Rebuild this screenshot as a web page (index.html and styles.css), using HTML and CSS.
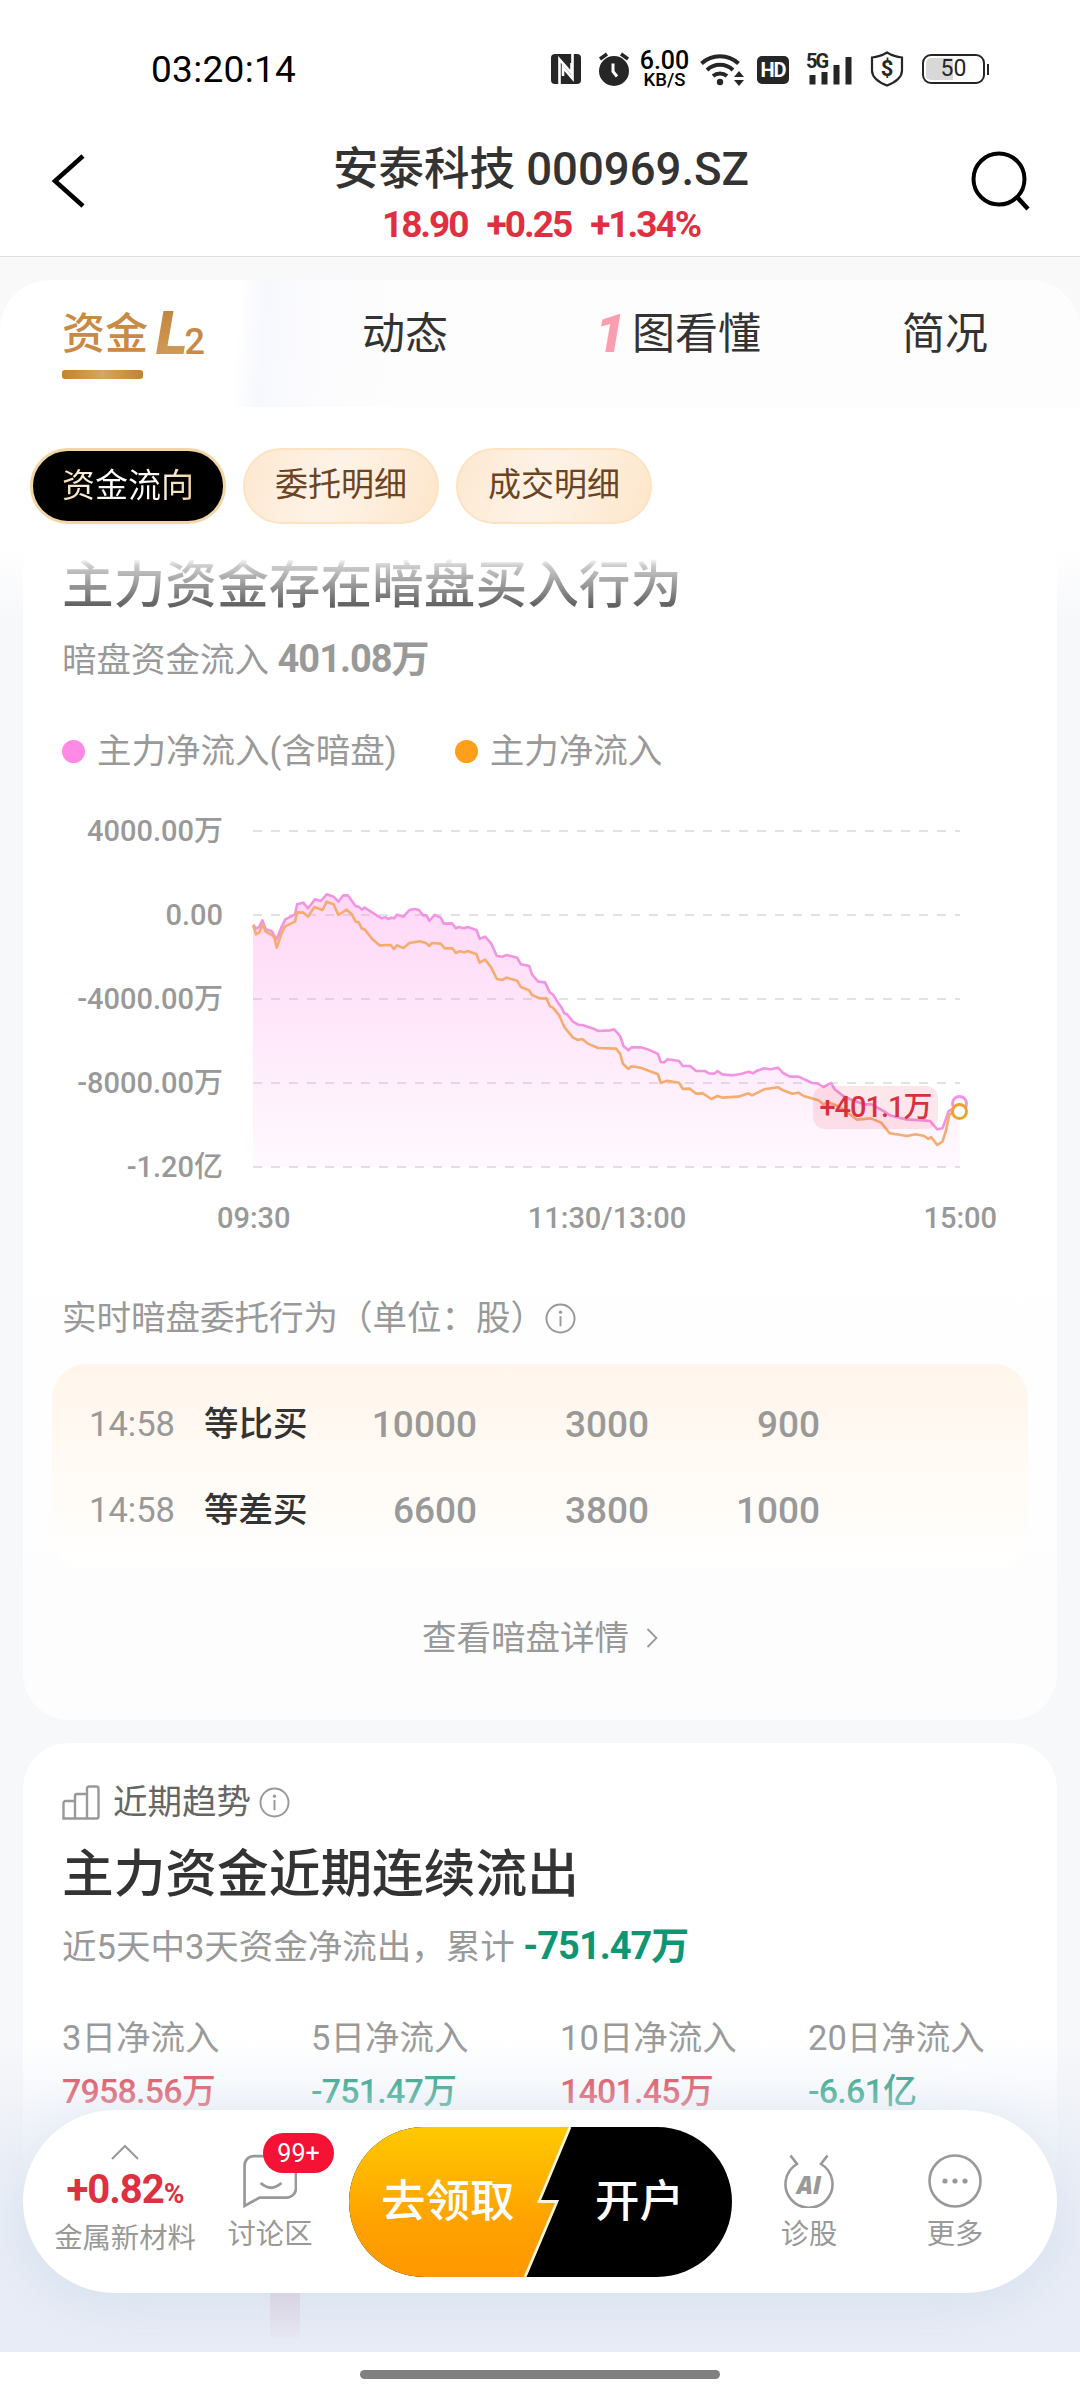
FILE: index.html
```html
<!doctype html>
<html lang="zh-CN">
<head>
	<meta charset="UTF-8">
	<meta name="viewport" content="width=device-width, initial-scale=1">
	<title>安泰科技 000969.SZ</title>
	<link rel="stylesheet" href="styles.css">
</head>
<body>

<svg class="sprite" xmlns="http://www.w3.org/2000/svg">
	<symbol id="icon-info" viewBox="0 0 32 32">
		<circle cx="16" cy="16" r="14.5" fill="none" stroke="currentColor" stroke-width="2"/>
		<circle cx="16" cy="9.5" r="1.7" fill="currentColor"/>
		<path d="M16 13.5v10.5" stroke="currentColor" stroke-width="2"/>
	</symbol>
</svg>

<div class="status">
	<span class="status__time">03:20:14</span>
	<div class="status__icons">
		<svg class="status__nfc" viewBox="0 0 30 30">
			<rect width="30" height="30" rx="4" fill="#262626"/>
			<path d="M8.5 30V5.5L20.500 19V9M21.500 0V24.500L12 13.500V22" fill="none" stroke="#fff" stroke-width="2.600"/>
		</svg>
		<svg class="status__alarm" viewBox="0 0 32 34">
			<circle cx="16" cy="19" r="15" fill="#262626"/>
			<path d="M2 7l7-5M30 7l-7-5" stroke="#262626" stroke-width="3.500"/>
			<path d="M15 11.500v8l4 5" fill="none" stroke="#fff" stroke-width="3"/>
		</svg>
		<div class="status__speed"><span>6.00</span><small>KB/S</small></div>
		<svg class="status__wifi" viewBox="0 0 45 34">
			<g fill="none" stroke="#262626" stroke-width="4">
				<path d="M1.500 11.500a27 27 0 0 1 37 0M7 18a19 19 0 0 1 26 0M13 24a11 11 0 0 1 14 0"/>
			</g>
			<circle cx="20" cy="30" r="3.200" fill="#262626"/>
			<path d="M39 19l5 6h-10zM39 34l5-6h-10z" fill="#262626"/>
		</svg>
		<span class="status__hd">HD</span>
		<div class="status__signal">
			<svg viewBox="0 0 46 34">
				<path d="M6.500 23v9.500M18.500 20v12.500M30.500 13v19.500M42.500 5v27.500" stroke="#262626" stroke-width="6"/>
			</svg>
			<span>5G</span>
		</div>
		<div class="status__shield">
			<svg viewBox="0 0 34 36">
				<path d="M17 1.500c5 3 9 4.500 15 5v13c0 7-6 11.500-15 15-9-3.500-15-8-15-15v-13c6-.5 10-2 15-5z" fill="none" stroke="#262626" stroke-width="2.200"/>
			</svg>
			<span>$</span>
		</div>
		<div class="battery"><span class="battery__body">50</span><i class="battery__tip"></i></div>
	</div>
</div>

<header class="nav">
	<svg class="nav__back" viewBox="0 0 34 54"><path d="M32 2L4 27l28 25" fill="none" stroke="#000" stroke-width="4.500"/></svg>
	<div class="nav__center">
		<div class="nav__title">安泰科技 000969.SZ</div>
		<div class="nav__quote"><span>18.90</span><span>+0.25</span><span>+1.34%</span></div>
	</div>
	<svg class="nav__search" viewBox="0 0 60 60">
		<circle cx="28" cy="28" r="25.500" fill="none" stroke="#000" stroke-width="4"/>
		<path d="M46 46l11 12" stroke="#000" stroke-width="4.500"/>
	</svg>
</header>

<div class="sheet">
	<nav class="tabs">
		<div class="tab tab--active">
			<span class="tab__label">资金</span><em class="tab__l">L</em><em class="tab__two">2</em>
		</div>
		<div class="tab tab--news">动态</div>
		<div class="tab tab--chart"><em class="tab__one">1</em>图看懂</div>
		<div class="tab tab--brief">简况</div>
	</nav>
	<div class="pills">
		<a class="pill pill--active"><span>资金流向</span></a>
		<a class="pill">委托明细</a>
		<a class="pill">成交明细</a>
	</div>
</div>

<main class="content">
	<section class="card card--dark-pool">
		<h2 class="card__title card__title--faded">主力资金存在暗盘买入行为</h2>
		<p class="card__sub">暗盘资金流入 <b class="num">401.08万</b></p>

		<div class="legend">
			<i class="legend__dot legend__dot--pink"></i><span>主力净流入(含暗盘)</span>
			<i class="legend__dot legend__dot--orange"></i><span>主力净流入</span>
		</div>

		<div class="chart">
			<div class="chart__y">
				<span>4000.00万</span>
				<span>0.00</span>
				<span>-4000.00万</span>
				<span>-8000.00万</span>
				<span>-1.20亿</span>
			</div>
			<div class="chart__plot">
				<svg class="chart__svg" viewBox="0 0 2053 1008" preserveAspectRatio="none">
					<defs>
						<linearGradient id="flow" x1="0" y1="190" x2="0" y2="1008" gradientUnits="userSpaceOnUse">
							<stop offset="0" stop-color="#ff8ae6" stop-opacity=".34"/>
							<stop offset="1" stop-color="#ff8ae6" stop-opacity=".05"/>
						</linearGradient>
					</defs>
					<path class="chart__grid" d="M0 0H2053M0 252H2053M0 504H2053M0 756H2053M0 1008H2053"/>
					<path fill="url(#flow)" d="M0 1008L0 282 10 292 18 288 27 268 37 295 54 300 69 325 82 290 94 265 122 250 128 220 146 215 160 232 180 205 197 210 214 190 234 197 248 212 262 193 275 193 298 225 307 227 316 236 324 230 347 245 362 255 374 262 410 262 418 251 437 257 454 237 470 234 482 237 494 253 504 253 512 270 527 252 545 260 554 278 578 277 589 292 597 288 612 292 623 288 649 297 658 323 674 317 692 338 708 375 724 377 737 372 767 380 778 400 802 405 810 430 828 452 848 454 862 485 871 490 884 512 896 530 904 547 912 550 929 572 946 582 956 582 989 593 1002 600 1036 598 1049 595 1066 615 1076 645 1090 658 1099 649 1126 649 1149 656 1176 669 1184 693 1194 694 1203 685 1237 690 1248 705 1269 705 1287 720 1312 720 1324 727 1339 728 1349 720 1362 730 1394 733 1419 728 1439 722 1452 727 1464 719 1484 712 1502 715 1525 710 1539 726 1559 737 1584 737 1624 756 1639 757 1656 768 1679 756 1689 775 1714 795 1739 807 1774 820 1796 820 1834 842 1849 853 1894 865 1949 868 1966 870 1987 895 2002 892 2012 865 2019 842 2029 835 2052 817V1008z"/>
					<polyline class="chart__line chart__line--pink" points="0 282 10 292 18 288 27 268 37 295 54 300 69 325 82 290 94 265 122 250 128 220 146 215 160 232 180 205 197 210 214 190 234 197 248 212 262 193 275 193 298 225 307 227 316 236 324 230 347 245 362 255 374 262 385 259 392 264 402 260 410 262 418 251 437 257 454 237 470 234 482 237 494 253 504 253 512 270 527 252 545 260 554 278 578 277 589 292 597 288 612 292 623 288 649 297 658 323 674 317 692 338 708 375 724 377 737 372 767 380 778 400 802 405 810 430 828 452 848 454 862 485 871 490 884 512 896 530 904 547 912 550 929 572 946 582 956 582 989 593 1002 600 1036 598 1049 595 1066 615 1076 645 1090 658 1099 649 1126 649 1149 656 1176 669 1184 693 1194 694 1203 685 1237 690 1248 705 1269 705 1287 720 1312 720 1324 727 1339 728 1349 720 1362 730 1394 733 1419 728 1439 722 1452 727 1464 719 1484 712 1502 715 1525 710 1539 726 1559 737 1584 737 1624 756 1639 757 1656 768 1679 756 1689 775 1714 795 1739 807 1774 820 1796 820 1834 842 1849 853 1894 865 1949 868 1966 870 1987 895 2002 892 2012 865 2019 842 2029 835 2052 817"/>
					<polyline class="chart__line chart__line--orange" points="0 282 9 310 18 305 28 280 37 302 55 312 62 320 69 350 82 310 92 287 122 272 128 244 146 245 160 257 178 228 202 237 214 212 234 220 248 252 272 236 287 250 298 272 307 274 316 293 324 295 347 325 367 343 400 342 409 354 418 343 437 351 454 336 484 331 502 336 512 345 520 336 545 338 557 352 579 352 589 366 599 361 614 364 623 360 649 370 658 395 674 386 692 410 708 444 724 447 737 440 767 449 778 468 802 478 810 492 832 502 852 502 862 526 871 530 889 553 904 588 929 620 944 627 956 624 971 637 1002 651 1054 653 1066 668 1074 698 1090 714 1099 706 1126 710 1176 730 1184 756 1203 749 1237 755 1248 774 1269 773 1287 788 1306 787 1331 804 1349 795 1364 800 1409 797 1439 787 1449 793 1484 775 1525 769 1539 778 1566 788 1584 785 1599 795 1642 808 1656 820 1669 814 1694 823 1714 835 1754 866 1794 862 1824 875 1849 907 1899 915 1924 910 1949 915 1961 924 1969 918 1987 942 2002 932 2012 900 2022 850 2052 841"/>
				</svg>
				<i class="chart__end chart__end--pink"></i>
				<i class="chart__end chart__end--orange"></i>
				<span class="chart__tag">+401.1万</span>
			</div>
		</div>
		<div class="chart__x"><span>09:30</span><span>11:30/13:00</span><span>15:00</span></div>

		<div class="subhead">实时暗盘委托行为（单位：股）<svg class="icon-info"><use href="#icon-info"/></svg></div>
		<div class="orders">
			<div class="orders__row">
				<span class="orders__time">14:58</span><b>等比买</b>
				<span class="orders__n">10000</span><span class="orders__n">3000</span><span class="orders__n">900</span>
			</div>
			<div class="orders__row">
				<span class="orders__time">14:58</span><b>等差买</b>
				<span class="orders__n">6600</span><span class="orders__n">3800</span><span class="orders__n">1000</span>
			</div>
		</div>
		<a class="more">查看暗盘详情<svg class="more__arrow" viewBox="0 0 12 20"><path d="M1.500 1l9 9-9 9" fill="none" stroke="#999" stroke-width="1.800"/></svg></a>
	</section>

	<section class="card card--trend">
		<div class="trend__head">
			<svg class="trend__icon" viewBox="0 0 38 35">
				<path d="M1.500 33.500V18a2 2 0 0 1 2-2H13V11a2 2 0 0 1 2-2h10V3.500a2 2 0 0 1 2-2h7.500a2 2 0 0 1 2 2v28a2 2 0 0 1-2 2zM13 16v17M25 9v24" fill="none" stroke="#999" stroke-width="2.400"/>
			</svg>
			<span>近期趋势</span>
			<svg class="icon-info"><use href="#icon-info"/></svg>
		</div>
		<h2 class="card__title">主力资金近期连续流出</h2>
		<p class="card__sub card__sub--trend">近5天中3天资金净流出，累计 <b class="num down">-751.47万</b></p>
		<div class="flows">
			<div><span>3日净流入</span><b class="up">7958.56万</b></div>
			<div><span>5日净流入</span><b class="down">-751.47万</b></div>
			<div><span>10日净流入</span><b class="up">1401.45万</b></div>
			<div><span>20日净流入</span><b class="down">-6.61亿</b></div>
		</div>
	</section>
</main>

<div class="dock">
	<i class="dock__bleed"></i>
	<div class="dock__bar">
		<div class="dock__sector">
			<svg viewBox="0 0 28 16"><path d="M1 15L14 2l13 13" fill="none" stroke="#999" stroke-width="2"/></svg>
			<b>+0.82<small>%</small></b>
			<span>金属新材料</span>
		</div>
		<div class="dock__item dock__item--chat">
			<svg class="dock__icon" viewBox="0 0 52 52">
				<path d="M10 2H42a9 9 0 0 1 9 9V33a9 9 0 0 1-9 9H16L1.500 50V11a9 9 0 0 1 9-9zM17 28q10 9 20 0" fill="none" stroke="#999" stroke-width="2.600"/>
			</svg>
			<span>讨论区</span>
			<i class="badge">99+</i>
		</div>
		<div class="cta">
			<svg class="cta__bg" viewBox="0 0 383 150">
				<defs>
					<linearGradient id="gold" x1="0" y1="0" x2="0" y2="1">
						<stop offset="0" stop-color="#ffc900"/>
						<stop offset=".6" stop-color="#ffa300"/>
						<stop offset="1" stop-color="#ff9800"/>
					</linearGradient>
				</defs>
				<rect width="383" height="150" rx="75" fill="#000"/>
				<path d="M75 0H220L189 74H207L175 150H75A75 75 0 0 1 75 0z" fill="url(#gold)"/>
				<path d="M221 0L190 74.500H208L176 150" fill="none" stroke="#fff6d8" stroke-width="2.800"/>
			</svg>
			<span class="cta__claim">去领取</span>
			<span class="cta__open">开户</span>
		</div>
		<div class="dock__item dock__item--ai">
			<div class="dock__icon dock__ai">
				<svg viewBox="0 0 50 54"><path d="M6.500 1.500L13 10A23.500 23.500 0 1 0 37 10L43.500 1.500" fill="none" stroke="#999" stroke-width="2.600"/></svg>
				<em>AI</em>
			</div>
			<span>诊股</span>
		</div>
		<div class="dock__item dock__item--more">
			<svg class="dock__icon" viewBox="0 0 54 54">
				<circle cx="27" cy="27" r="25.500" fill="none" stroke="#999" stroke-width="2.600"/>
				<g fill="#999"><circle cx="17" cy="27" r="2.600"/><circle cx="27" cy="27" r="2.600"/><circle cx="37" cy="27" r="2.600"/></g>
			</svg>
			<span>更多</span>
		</div>
	</div>
</div>
<div class="home"><i></i></div>

</body>
</html>
```
FILE: styles.css
```css
* {
	margin: 0;
	padding: 0;
	box-sizing: border-box;
}
body {
	position: relative;
	width: 1080px;
	height: 2400px;
	overflow: hidden;
	background-color: #fff;
	color: #333;
	font-family: Roboto, 'Noto Sans CJK SC', sans-serif;
	font-size: 34.5px;
	line-height: 1;
}
svg {
	display: block;
	flex: none;
}
i, em {
	font-style: normal;
}
.sprite {
	display: none;
}
.up {
	color: #d9303f;
}
.down {
	color: #0d9673;
}

/* status bar */
.status {
	display: flex;
	justify-content: space-between;
	align-items: center;
	height: 138px;
	padding: 0 91px 0 151px;
}
.status__time {
	color: #000;
	font-size: 37px;
	letter-spacing: .3px;
}
.status__icons {
	display: flex;
	align-items: center;
	color: #262626;
}
.status__nfc {
	width: 30px;
	height: 30px;
	margin-right: 17px;
}
.status__alarm {
	width: 32px;
	height: 34px;
	margin-right: 9px;
}
.status__speed {
	display: flex;
	flex-direction: column;
	align-items: center;
	width: 51px;
	margin-right: 10px;
	color: #000;
	font-size: 25px;
	line-height: 21px;
	font-weight: 500;
}
.status__speed small {
	font-size: 18.500px;
	line-height: 18px;
}
.status__wifi {
	width: 45px;
	height: 34px;
	margin-right: 12px;
}
.status__hd {
	width: 32px;
	height: 28px;
	margin: 2px 17px 0 0;
	border-radius: 5px;
	background-color: #262626;
	color: #fff;
	font-size: 20px;
	line-height: 29px;
	font-weight: bold;
	text-align: center;
	letter-spacing: -1px;
}
.status__signal {
	position: relative;
	width: 46px;
	margin-right: 18px;
}
.status__signal span {
	position: absolute;
	left: 0;
	top: -1px;
	background-color: #fff;
	font-size: 20px;
	line-height: 20px;
	font-weight: bold;
	letter-spacing: -2px;
}
.status__shield {
	position: relative;
	width: 34px;
	margin-right: 18px;
}
.status__shield span {
	position: absolute;
	left: 0;
	right: 0;
	top: 7px;
	font-size: 22px;
	font-weight: bold;
	text-align: center;
}
.battery {
	display: flex;
	align-items: center;
}
.battery__body {
	width: 63px;
	height: 30px;
	border: 2.500px solid #262626;
	border-radius: 9px;
	background: linear-gradient(90deg, #d8d8d8 50%, #fff 50%) content-box;
	padding: 2px;
	font-size: 23px;
	line-height: 22px;
	text-align: center;
}
.battery__tip {
	width: 2px;
	height: 11px;
	margin-left: 2px;
	background-color: #262626;
}

/* title bar */
.nav {
	display: flex;
	justify-content: space-between;
	height: 119px;
	padding: 0 49px 0 51px;
	border-bottom: 1px solid #ddd;
}
.nav__back {
	width: 34px;
	height: 54px;
	margin-top: 16px;
}
.nav__center {
	display: flex;
	flex-direction: column;
	align-items: center;
	padding-left: 26px;
}
.nav__title {
	font-size: 45.500px;
	line-height: 64px;
	font-weight: 500;
}
.nav__quote {
	display: flex;
	gap: 19px;
	color: #e02f40;
	font-size: 37px;
	line-height: 46px;
	font-weight: bold;
	letter-spacing: -2px;
}
.nav__search {
	width: 60px;
	height: 60px;
	margin-top: 13px;
}

/* tabs and pills */
.sheet {
	height: 291px;
	padding-top: 23px;
	background: linear-gradient(#f9f9f9 80px, #fff 80px);
}
.tabs {
	display: flex;
	height: 127px;
	padding: 0 0 0 62px;
	border-radius: 50px 50px 0 0;
	background: linear-gradient(94deg, #fff 22%, #f7f8fd 24.500%, #fcfcfe 30%, #fdfdfd 38%, #fdfdfd 100%);
	font-size: 43px;
	line-height: 108px;
}
.tab {
	display: flex;
	align-items: center;
	height: 108px;
}
.tab--active {
	position: relative;
	width: 300px;
	color: #c88a45;
	font-weight: 500;
}
.tab--active:after {
	position: absolute;
	left: 0;
	top: 90px;
	width: 81px;
	height: 9px;
	border-radius: 3px;
	background: linear-gradient(90deg, #c5812f, #d9a562 50%, #c5812f);
	content: '';
}
.tab__l {
	margin-left: 8px;
	background: linear-gradient(#b8782e, #dca968);
	background-clip: text;
	-webkit-text-fill-color: transparent;
	font-size: 60px;
	font-style: italic;
	font-weight: 900;
}
.tab__two {
	margin: 16px 0 0 -3px;
	font-size: 36px;
}
.tab--news {
	width: 227px;
}
.tab--chart {
	width: 313px;
}
.tab__one {
	width: 43px;
	color: #fb9fb0;
	font-size: 54px;
	font-style: italic;
	font-weight: 900;
	text-align: center;
}
.pills {
	display: flex;
	gap: 17px;
	padding: 41px 0 0 30px;
}
.pill {
	width: 196px;
	height: 76px;
	border: 2px solid #fde3c4;
	border-radius: 38px;
	background: linear-gradient(110deg, #fde8d0, #fef3e7 45%, #fde6ca);
	color: #6b4423;
	font-size: 33px;
	line-height: 70px;
	text-align: center;
}
.pill--active {
	border: 3px solid #f3d6a6;
	background: #000;
}
.pill--active span {
	background: linear-gradient(90deg, #f5dcb4, #fff 35%, #fff 65%, #f3cf98);
	background-clip: text;
	-webkit-text-fill-color: transparent;
	line-height: 68px;
}

/* cards */
.content {
	height: 1852px;
	padding: 0 23px;
	overflow: hidden;
	background: linear-gradient(#fff, #f7f8fa 70px);
}
.card {
	padding: 0 39px;
	background-color: #fff;
}
.card--dark-pool {
	height: 1172px;
	padding-top: 6px;
	border-radius: 0 0 46px 46px;
	background: linear-gradient(#fff 50%, #fdfdfd);
}
.card--trend {
	height: 700px;
	margin-top: 23px;
	padding-top: 34px;
	border-radius: 46px;
}
.card__title {
	font-size: 51.700px;
	line-height: 64px;
	font-weight: 500;
}
.card__title--faded {
	background: linear-gradient(#fff 4px, #ccc 12px, #4a4a4a 60px);
	background-clip: text;
	-webkit-text-fill-color: transparent;
}
.card__sub {
	margin-top: 16px;
	color: #999;
	line-height: 50px;
}
.card__sub .num {
	font-size: 38px;
	letter-spacing: -1px;
}
.card__sub--trend {
	margin-top: 14px;
}

/* chart */
.legend {
	display: flex;
	align-items: center;
	height: 50px;
	margin-top: 41px;
	color: #999;
}
.legend__dot {
	width: 23px;
	height: 23px;
	margin-right: 12px;
	border-radius: 50%;
}
.legend__dot--pink {
	background-color: #ff8ae6;
}
.legend__dot--orange {
	margin-left: 58px;
	background-color: #ff9f1a;
}
.chart {
	display: flex;
	margin-top: 55px;
	color: #999;
}
.chart__y {
	display: flex;
	flex-direction: column;
	justify-content: space-between;
	width: 161px;
	margin: -21px 30px -21px 0;
	font-size: 29px;
	line-height: 42px;
	text-align: right;
	font-weight: 500;
	white-space: nowrap;
}
.chart__plot {
	position: relative;
	width: 707px;
	height: 336px;
}
.chart__svg {
	width: 707px;
	height: 336px;
	overflow: visible;
}
.chart__grid {
	stroke: #e2e2e2;
	stroke-width: 2px;
	stroke-dasharray: 9 9;
	vector-effect: non-scaling-stroke;
}
.chart__line {
	fill: none;
	stroke-width: 2.600px;
	stroke-linejoin: round;
	vector-effect: non-scaling-stroke;
}
.chart__line--pink {
	stroke: #f195e2;
}
.chart__line--orange {
	stroke: #f5ac70;
}
.chart__end {
	position: absolute;
	left: 698px;
	width: 17px;
	height: 17px;
	border: 3px solid #f195e2;
	border-radius: 50%;
	background-color: #fff;
}
.chart__end--pink {
	top: 264px;
}
.chart__end--orange {
	top: 272px;
	border-color: #eba52d;
}
.chart__tag {
	position: absolute;
	left: 560px;
	top: 255px;
	width: 125px;
	height: 43px;
	border-radius: 12px;
	background-color: rgba(240, 60, 80, .12);
	color: #d9303f;
	font-size: 29px;
	line-height: 43px;
	text-align: center;
	font-weight: 500;
	letter-spacing: -1px;
}
.chart__x {
	display: flex;
	justify-content: space-between;
	width: 780px;
	margin: 30px 0 0 155px;
	color: #999;
	font-size: 29px;
	line-height: 42px;
	font-weight: 500;
}

/* orders table */
.subhead {
	display: flex;
	align-items: center;
	height: 50px;
	margin-top: 54px;
	color: #999;
}
.icon-info {
	width: 31px;
	height: 31px;
	color: #999;
}
.orders {
	height: 204px;
	margin: 21px -10px 0;
	padding: 17px 37px;
	border-radius: 34px;
	background: linear-gradient(#fff5eb, #fffaf3 45%, #fff);
}
.orders__row {
	display: grid;
	grid-template-columns: 115px 110px 163px 172px 171px;
	align-items: center;
	height: 86px;
}
.orders__row b {
	font-weight: 500;
}
.orders__time {
	color: #999;
}
.orders__n {
	color: #999;
	font-size: 37px;
	text-align: right;
	font-weight: 500;
}
.more {
	display: flex;
	align-items: center;
	justify-content: center;
	gap: 17px;
	height: 50px;
	margin-top: 45px;
	color: #999;
}
.more__arrow {
	width: 12px;
	height: 20px;
}

/* trend card */
.trend__head {
	display: flex;
	align-items: center;
	height: 50px;
	color: #666;
}
.trend__icon {
	width: 38px;
	height: 35px;
	margin-right: 13px;
}
.trend__head .icon-info {
	margin-left: 8px;
}
.trend__head + .card__title {
	margin-top: 16px;
}
.flows {
	display: grid;
	grid-template-columns: 249px 249px 248px 200px;
	margin-top: 40px;
	white-space: nowrap;
}
.flows div {
	display: flex;
	flex-direction: column;
}
.flows span {
	color: #999;
	line-height: 52px;
}
.flows b {
	font-size: 34px;
	line-height: 54px;
	font-weight: 500;
	letter-spacing: -.8px;
}

/* bottom dock over the scrolled content */
.dock {
	position: absolute;
	left: 0;
	top: 2040px;
	width: 1080px;
	height: 312px;
	padding: 70px 23px 0;
	overflow: hidden;
	background: linear-gradient(rgba(232, 236, 246, 0), rgba(232, 236, 246, .5) 70px, #e8ecf6 200px);
}
.dock__bleed {
	position: absolute;
	left: 270px;
	top: 240px;
	width: 30px;
	height: 58px;
	background: linear-gradient(#e0cede, rgba(232, 225, 240, .3));
}
.dock__bar {
	position: relative;
	display: flex;
	height: 183px;
	border-radius: 92px;
	background-color: #fff;
	box-shadow: 0 10px 50px rgba(190, 212, 230, .45);
	color: #999;
	font-size: 28.300px;
}
.dock__sector {
	display: flex;
	flex-direction: column;
	align-items: center;
	width: 142px;
	margin-left: 31px;
	padding-top: 34px;
	white-space: nowrap;
}
.dock__sector svg {
	width: 28px;
	height: 16px;
}
.dock__sector b {
	color: #e02f40;
	font-size: 40px;
	line-height: 50px;
	margin: 5px 0 0;
	letter-spacing: -1px;
}
.dock__sector small {
	font-size: 28px;
}
.dock__sector span, .dock__item span {
	line-height: 40px;
}
.dock__item {
	position: relative;
	display: flex;
	flex-direction: column;
	align-items: center;
	padding-top: 44px;
}
.dock__icon {
	width: 54px;
	height: 54px;
	margin-bottom: 7px;
}
.dock__item--chat {
	width: 86px;
	margin-left: 31px;
}
.badge {
	position: absolute;
	left: 36px;
	top: 23px;
	width: 71px;
	height: 40px;
	border-radius: 20px;
	background-color: #f61235;
	color: #fff;
	font-size: 25px;
	line-height: 41px;
	text-align: center;
}
.cta {
	position: relative;
	display: flex;
	width: 383px;
	height: 150px;
	margin: 17px 0 0 36px;
	color: #fff;
	font-size: 44.500px;
	line-height: 150px;
	font-weight: 500;
}
.cta__bg {
	position: absolute;
	left: 0;
	top: 0;
	width: 383px;
	height: 150px;
}
.cta span {
	position: relative;
}
.cta__claim {
	width: 214px;
	padding-left: 32px;
}
.cta__open {
	padding-left: 32px;
}
.dock__item--ai {
	width: 60px;
	margin-left: 47px;
}
.dock__ai {
	position: relative;
}
.dock__ai svg {
	height: 54px;
	margin: 0 auto;
}
.dock__ai em {
	position: absolute;
	left: 0;
	right: 0;
	top: 19px;
	font-family: 'Open Sans', sans-serif;
	font-size: 24px;
	line-height: 24px;
	font-style: italic;
	font-weight: 800;
	text-align: center;
}
.dock__item--more {
	width: 60px;
	margin-left: 86px;
}
.home {
	display: flex;
	justify-content: center;
	height: 48px;
	margin-top: -48px;
	padding-top: 18px;
	position: relative;
	background-color: #fff;
}
.home i {
	width: 360px;
	height: 9px;
	border-radius: 5px;
	background-color: #808080;
}
```
